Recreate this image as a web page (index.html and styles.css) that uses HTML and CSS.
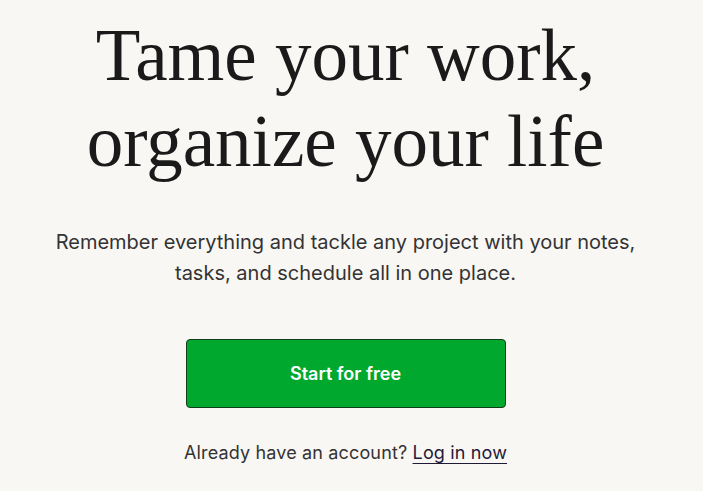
FILE: index.html
```html
<!DOCTYPE html>
<html lang="en">
<head>
<meta charset="utf-8">
<title>Tame your work</title>
<link rel="stylesheet" href="styles.css">
</head>
<body>
<main class="hero">
  <h1 class="hero-title">Tame your work,<br>organize your life</h1>
  <p class="hero-text">Remember everything and tackle any project with your notes, tasks, and schedule all in one place.</p>
  <a class="cta" href="#">Start for free</a>
  <p class="login">Already have an account? <a class="login-link" href="#">Log in now</a></p>
</main>
</body>
</html>
```

FILE: styles.css
```css
html, body {
  margin: 0;
  padding: 0;
  background: #f9f7f4;
}
body {
  width: 691px;
  height: 491px;
  overflow: hidden;
}
.hero {
  display: flex;
  flex-direction: column;
  align-items: center;
  text-align: center;
  padding-top: 13px;
}
.hero-title {
  margin: 0;
  font-family: "Liberation Serif", "Times New Roman", serif;
  font-weight: 400;
  font-size: 73px;
  line-height: 86px;
  letter-spacing: 0;
  color: #1a1a1a;
}
.hero-text {
  margin: 42px 0 0;
  max-width: 610px;
  font-family: Inter, "Noto Sans", sans-serif;
  font-size: 20px;
  line-height: 31px;
  color: #333333;
}
.cta {
  margin-top: 50px;
  box-sizing: border-box;
  width: 320px;
  height: 69px;
  display: flex;
  align-items: center;
  justify-content: center;
  background: #00a82d;
  border: 1px solid #0e3f18;
  border-radius: 4px;
  color: #ffffff;
  font-family: Inter, "Noto Sans", sans-serif;
  font-weight: 600;
  font-size: 18px;
  text-decoration: none;
}
.login {
  margin: 33px 0 0;
  font-family: Inter, "Noto Sans", sans-serif;
  font-size: 18px;
  line-height: 24px;
  letter-spacing: 0.15px;
  color: #333333;
}
.login-link {
  color: #1f1a38;
  text-decoration: underline;
  text-underline-offset: 4px;
  text-decoration-thickness: 1px;
}
```
